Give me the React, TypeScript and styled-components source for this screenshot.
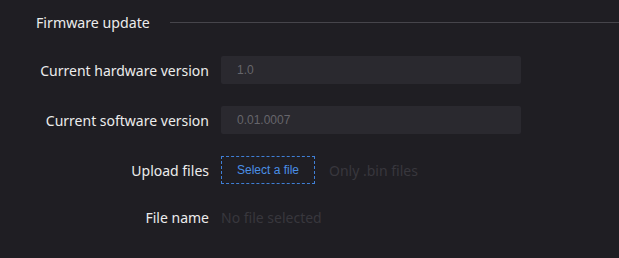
import React from "react";
import styled, { createGlobalStyle } from "styled-components";

const Global = createGlobalStyle`
  html, body { margin: 0; padding: 0; background: #1f1e23; }
  body { font-family: "Noto Sans", "Open Sans", sans-serif; }
`;

const Page = styled.div`
  width: 619px;
  height: 258px;
  background: #1f1e23;
  overflow: hidden;
`;

const Header = styled.div`
  display: flex;
  align-items: center;
  height: 44px;
  padding-left: 36px;
  gap: 20px;
`;

const Title = styled.span`
  color: #ececec;
  font-size: 14.2px;
  white-space: nowrap;
`;

const Rule = styled.div`
  flex: 1;
  height: 1px;
  background: #46454b;
`;

const Form = styled.div`
  display: grid;
  grid-template-columns: 209px 300px;
  grid-template-rows: repeat(3, 28px) 22px;
  column-gap: 12px;
  row-gap: 22px;
  padding-top: 12px;
`;

const Label = styled.div`
  display: flex;
  align-items: center;
  justify-content: flex-end;
  color: #ececec;
  font-size: 14px;
  white-space: nowrap;
`;

const Field = styled.div`
  display: flex;
  align-items: center;
  background: #2a292f;
  border-radius: 2px;
  padding-left: 16px;
  color: #66656b;
  font-family: "Liberation Sans", Arial, sans-serif;
  font-size: 12px;
`;

const Cell = styled.div`
  display: flex;
  align-items: center;
  gap: 14px;
`;

const FileButton = styled.button`
  width: 94px;
  height: 28px;
  box-sizing: border-box;
  border: 1px dashed #3f7fd6;
  background: transparent;
  color: #4a8fe6;
  font-family: "Liberation Sans", Arial, sans-serif;
  font-size: 12px;
  padding: 0;
  cursor: pointer;
`;

const Hint = styled.span`
  color: #38373d;
  font-size: 14px;
  white-space: nowrap;
`;

export default function App() {
  return (
    <Page>
      <Global />
      <Header>
        <Title>Firmware update</Title>
        <Rule />
      </Header>
      <Form>
        <Label>Current hardware version</Label>
        <Field>1.0</Field>
        <Label>Current software version</Label>
        <Field>0.01.0007</Field>
        <Label>Upload files</Label>
        <Cell>
          <FileButton>Select a file</FileButton>
          <Hint>Only .bin files</Hint>
        </Cell>
        <Label>File name</Label>
        <Cell>
          <Hint>No file selected</Hint>
        </Cell>
      </Form>
    </Page>
  );
}
